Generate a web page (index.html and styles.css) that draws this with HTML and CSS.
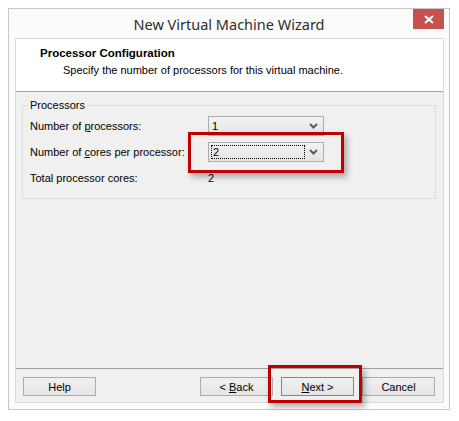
FILE: index.html
```html
<!DOCTYPE html>
<html>
<head>
<meta charset="utf-8">
<link rel="stylesheet" href="styles.css">
</head>
<body>
<div class="window">
  <div class="titlebar">
    <span></span>
    <div class="title">New Virtual Machine Wizard</div>
    <div class="close-wrap">
      <div class="close">
        <svg width="10" height="9" viewBox="0 0 10 9"><path d="M1 1 L9 8 M9 1 L1 8" stroke="#fff" stroke-width="2" fill="none"/></svg>
      </div>
    </div>
  </div>
  <div class="client">
    <div class="header">
      <div class="h-title">Processor Configuration</div>
      <div class="h-sub">Specify the number of processors for this virtual machine.</div>
    </div>
    <div class="content">
      <fieldset class="group">
        <legend>Processors</legend>
        <div class="grid">
          <div class="lbl"><span>Number of <u>p</u>rocessors:</span></div>
          <div class="combo"><span class="val">1</span><svg class="chev" width="9" height="6" viewBox="0 0 9 6"><path d="M1 1 L4.5 4.5 L8 1" stroke="#5a5a5a" stroke-width="2" fill="none"/></svg></div>
          <div class="lbl"><span>Number of <u>c</u>ores per processor:</span></div>
          <div class="combo"><span class="val focus">2</span><svg class="chev" width="9" height="6" viewBox="0 0 9 6"><path d="M1 1 L4.5 4.5 L8 1" stroke="#5a5a5a" stroke-width="2" fill="none"/></svg></div>
          <div class="lbl"><span>Total processor cores:</span></div>
          <div class="plain"><span>2</span></div>
        </div>
      </fieldset>
    </div>
    <div class="footer">
      <div class="btn"><span>Help</span></div>
      <div class="spacer"></div>
      <div class="btn back"><span>&lt; <u>B</u>ack</span></div>
      <div class="btn next"><span><u>N</u>ext &gt;</span></div>
      <div class="btn cancel"><span>Cancel</span></div>
    </div>
  </div>
</div>
<div class="mark mark1"></div>
<div class="mark mark2"></div>
</body>
</html>
```
FILE: styles.css
```css
html, body {
  margin: 0;
  padding: 0;
  background: #ffffff;
}
body {
  width: 459px;
  height: 421px;
  position: relative;
  font-family: "Liberation Sans", Arial, sans-serif;
  font-size: 11px;
  color: #000;
}
.window {
  box-sizing: border-box;
  margin: 8px 0 0 8px;
  width: 442px;
  height: 402px;
  border: 1px solid #c8c8c8;
  background: #fbfbfb;
  display: flex;
  flex-direction: column;
}
.titlebar {
  height: 29px;
  display: grid;
  grid-template-columns: 1fr auto 1fr;
}
.title {
  font-family: "Noto Sans", "Open Sans", sans-serif;
  font-size: 14.5px;
  color: #2e2e2e;
  align-self: center;
  line-height: 20px;
  padding-top: 1px;
}
.close-wrap {
  display: flex;
  justify-content: flex-end;
  padding-right: 5px;
}
.close {
  width: 31px;
  height: 20px;
  background: #c75050;
  display: flex;
  align-items: center;
  justify-content: center;
}
.close svg { margin-top: 1px; }
.client {
  box-sizing: border-box;
  margin: 0 5px 6px 6px;
  height: 365px;
  border: 1px solid #d9d9d9;
  display: flex;
  flex-direction: column;
  background: #f0f0f0;
}
.header {
  background: #ffffff;
  border-bottom: 1px solid #a0a0a0;
  padding-top: 7px;
  box-sizing: content-box;
  height: 45px;
}
.h-title {
  font-weight: bold;
  line-height: 14px;
  padding-left: 24px;
  font-size: 11.5px;
}
.h-sub {
  line-height: 14px;
  margin-top: 3px;
  padding-left: 47px;
}
.content {
  flex: 1;
  padding: 7px 7px 0 6px;
}
.group {
  margin: 0;
  border: 1px solid #dcdcdc;
  padding: 0 7px 10px 7px;
}
.group legend {
  padding: 0 2px;
  margin-left: -2px;
  line-height: 12px;
}
.grid {
  display: grid;
  grid-template-columns: 178px 116px;
  grid-auto-rows: 20px;
  row-gap: 6px;
  margin-top: 5px;
}
.lbl, .plain {
  display: flex;
  align-items: center;
}
.lbl u, .btn u { text-decoration-thickness: 1px; text-underline-offset: 1px; }
.combo {
  box-sizing: border-box;
  border: 1px solid #acacac;
  background: linear-gradient(#f3f3f3, #e4e4e4);
  display: flex;
  align-items: center;
  justify-content: space-between;
  padding: 0 5px 0 2px;
}
.val {
  box-sizing: border-box;
  padding: 1px 1px 0 1px;
  line-height: 12px;
  height: 14px;
}
.val.focus {
  border: 1px dotted #000;
  width: 94px;
  padding: 0 0 0 1px;
}
.chev { display: block; }
.footer {
  border-top: 1px solid #a0a0a0;
  height: 34px;
  box-sizing: border-box;
  padding: 8px 8px 0 7px;
  display: flex;
  align-items: flex-start;
  gap: 8px;
}
.spacer { flex: 1; }
.btn {
  box-sizing: border-box;
  width: 73px;
  height: 19px;
  border: 1px solid #acacac;
  background: linear-gradient(#f0f0f0, #e5e5e5);
  display: flex;
  align-items: center;
  justify-content: center;
  font-size: 11px;
  color: #000;
}
.btn.next {
  border-color: #3c98f0;
}
.mark {
  position: absolute;
  box-sizing: border-box;
  border: 3px solid #c00000;
  box-shadow: 3px 4px 6px rgba(0,0,0,0.3);
}
.mark1 { left: 188px; top: 132px; width: 156px; height: 41px; }
.mark2 { left: 268px; top: 365px; width: 94px; height: 38px; }
```
